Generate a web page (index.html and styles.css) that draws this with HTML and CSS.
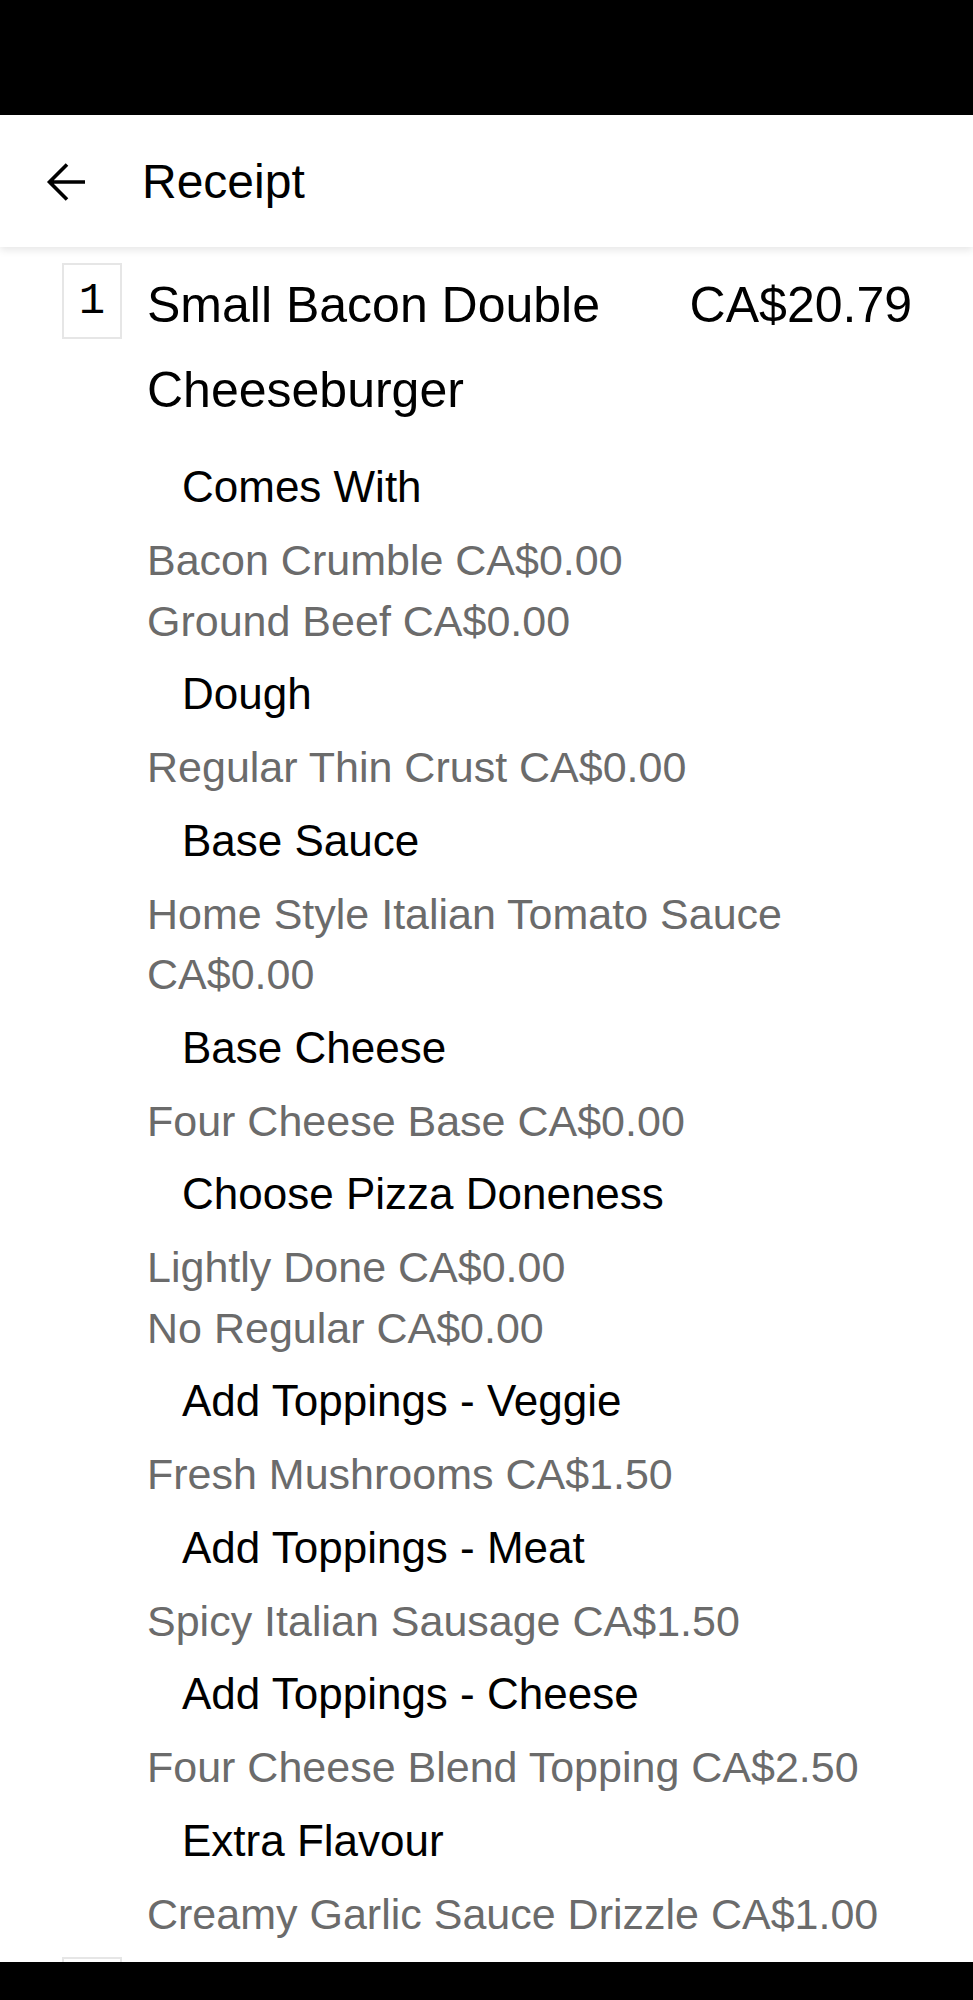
FILE: index.html
```html
<!DOCTYPE html>
<html lang="en">
  <head>
    <meta charset="UTF-8" />
    <meta name="viewport" content="width=device-width, initial-scale=1.0" />
    <title>Receipt</title>
    <link rel="stylesheet" href="styles.css">
  </head>
  <body>
    <div class="screen">
      <div class="status-bar"></div>
      <div class="app-bar">
        <svg class="back-icon" width="40" height="40" viewBox="0 0 40 40">
          <path d="M39 20H4 M21 2.5 L3.5 20 L21 37.5" fill="none" stroke="#000" stroke-width="3.6" />
        </svg>
        <div class="app-title">Receipt</div>
      </div>
      <div class="content">
        <div class="order-item">
          <div class="qty">1</div>
          <div class="item-main">
            <div class="item-line">
              <div class="item-name">Small Bacon Double Cheeseburger</div>
              <div class="item-price">CA$20.79</div>
            </div>
            <div class="options">
              <div class="option-group">Comes With</div>
              <div class="option">Bacon Crumble CA$0.00</div>
              <div class="option">Ground Beef CA$0.00</div>
              <div class="option-group">Dough</div>
              <div class="option">Regular Thin Crust CA$0.00</div>
              <div class="option-group">Base Sauce</div>
              <div class="option">Home Style Italian Tomato Sauce CA$0.00</div>
              <div class="option-group">Base Cheese</div>
              <div class="option">Four Cheese Base CA$0.00</div>
              <div class="option-group">Choose Pizza Doneness</div>
              <div class="option">Lightly Done CA$0.00</div>
              <div class="option">No Regular CA$0.00</div>
              <div class="option-group">Add Toppings - Veggie</div>
              <div class="option">Fresh Mushrooms CA$1.50</div>
              <div class="option-group">Add Toppings - Meat</div>
              <div class="option">Spicy Italian Sausage CA$1.50</div>
              <div class="option-group">Add Toppings - Cheese</div>
              <div class="option">Four Cheese Blend Topping CA$2.50</div>
              <div class="option-group">Extra Flavour</div>
              <div class="option">Creamy Garlic Sauce Drizzle CA$1.00</div>
            </div>
          </div>
        </div>
        <div class="order-item">
          <div class="qty"></div>
          <div class="item-main"></div>
        </div>
      </div>
      <div class="nav-bar"></div>
    </div>
  </body>
</html>
```

FILE: styles.css
```css
body {
  margin: 0;
  font-family: "Liberation Sans", Arial, sans-serif;
  color: #000;
  background: #fff;
}
.screen {
  display: flex;
  flex-direction: column;
  height: 2000px;
  overflow: hidden;
}
.status-bar {
  height: 115px;
  background: #000;
  flex-shrink: 0;
}
.app-bar {
  height: 132px;
  flex-shrink: 0;
  display: flex;
  align-items: center;
  padding-left: 46px;
  background: #fff;
  box-shadow: 0 3px 8px rgba(0, 0, 0, 0.1);
  position: relative;
  z-index: 1;
}
.back-icon {
  display: block;
  margin-top: 2px;
}
.app-title {
  margin-left: 56px;
  font-size: 48px;
  line-height: 1;
  margin-top: 2px;
}
.content {
  flex: 1;
  overflow: hidden;
  padding: 16px 61px 0 62px;
}
.order-item {
  display: flex;
  gap: 25px;
  margin-bottom: 13px;
}
.qty {
  width: 56px;
  height: 72px;
  border: 2px solid #e6e6e6;
  flex-shrink: 0;
  display: flex;
  align-items: center;
  justify-content: center;
  font-family: "Liberation Mono", "Courier New", monospace;
  font-size: 44px;
}
.item-main {
  flex: 1;
}
.item-line {
  display: flex;
  justify-content: space-between;
  gap: 40px;
  font-size: 50px;
  line-height: 85px;
}
.item-price {
  white-space: nowrap;
}
.options {
  margin-top: 11px;
}
.option-group {
  padding-left: 35px;
  font-size: 44px;
  line-height: 86px;
}
.option {
  font-size: 43px;
  line-height: 60.5px;
  color: #6b6b6b;
}
.nav-bar {
  height: 38px;
  background: #000;
  flex-shrink: 0;
}
```
